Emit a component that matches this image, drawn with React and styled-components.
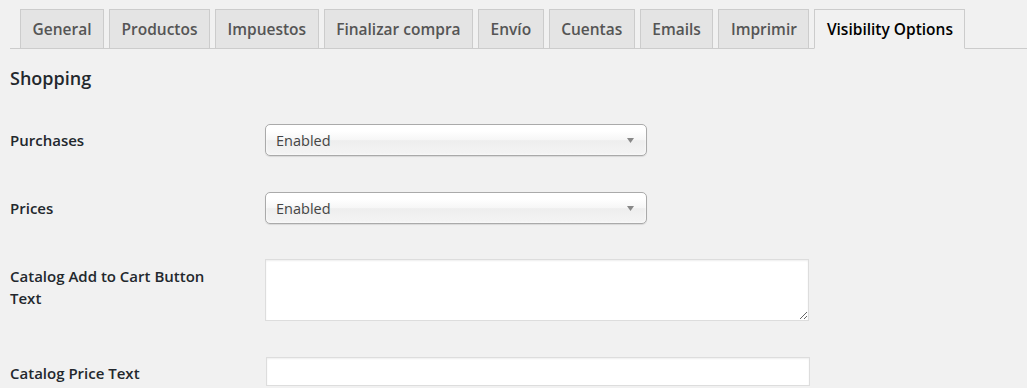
import styled, { createGlobalStyle } from 'styled-components'

const GlobalStyle = createGlobalStyle`
  html, body {
    margin: 0;
    padding: 0;
    background: #f1f1f1;
  }
  body {
    font-family: 'Open Sans', 'Noto Sans', sans-serif;
    color: #23282d;
  }
`

const Page = styled.div`
  width: 1027px;
  height: 388px;
  overflow: hidden;
  background: #f1f1f1;
`

const TabBar = styled.nav`
  display: flex;
  align-items: flex-end;
  margin-left: 10px;
  padding: 9px 0 0 5px;
  border-bottom: 1px solid #ccc;
`

const Tab = styled.a`
  display: block;
  box-sizing: border-box;
  height: 40px;
  margin: 0 0 -1px 5px;
  padding: 0 11.5px;
  border: 1px solid #ccc;
  border-bottom-color: ${p => (p.$active ? '#f1f1f1' : '#ccc')};
  background: ${p => (p.$active ? '#f1f1f1' : '#e4e4e4')};
  color: ${p => (p.$active ? '#000' : '#555')};
  font-size: 15.5px;
  font-weight: 600;
  line-height: 38px;
  white-space: nowrap;
  text-decoration: none;
`

const Heading = styled.h3`
  margin: 17px 0 16px 10px;
  font-size: 18px;
  font-weight: 600;
  line-height: 24px;
  color: #23282d;
`

const FormTable = styled.div`
  display: flex;
  flex-direction: column;
`

const Row = styled.div`
  display: grid;
  grid-template-columns: 265px 1fr;
  align-items: start;
  padding: 18px 0;
`

const Label = styled.label`
  display: block;
  max-width: 215px;
  padding: 5px 0 0 10px;
  font-size: 15px;
  font-weight: 600;
  line-height: 22px;
  color: #23282d;
`

const Chosen = styled.div`
  display: flex;
  align-items: center;
  justify-content: space-between;
  box-sizing: border-box;
  width: 382px;
  height: 32px;
  padding: 0 12px 0 10px;
  border: 1px solid #aaa;
  border-radius: 5px;
  background: linear-gradient(#fff 20%, #f6f6f6 50%, #eee 52%, #f4f4f4 100%);
  box-shadow: inset 0 0 3px #fff, 0 1px 1px rgba(0, 0, 0, 0.1);
  font-size: 14.5px;
  color: #444;
`

const TextArea = styled.textarea`
  display: block;
  box-sizing: border-box;
  width: 544px;
  height: 62px;
  margin: -1px 0 0;
  border: 1px solid #ddd;
  background: #fff;
  box-shadow: inset 0 1px 2px rgba(0, 0, 0, 0.07);
  font-family: inherit;
  font-size: 14px;
  outline: none;
`

const TextInput = styled.input`
  display: block;
  box-sizing: border-box;
  width: 544px;
  height: 29px;
  margin: 0 0 0 1px;
  border: 1px solid #ddd;
  background: #fff;
  box-shadow: inset 0 1px 2px rgba(0, 0, 0, 0.07);
  font-family: inherit;
  font-size: 14px;
  outline: none;
`

const tabs = ['General', 'Productos', 'Impuestos', 'Finalizar compra', 'Envío', 'Cuentas', 'Emails', 'Imprimir', 'Visibility Options']

const Arrow = () => (
  <svg width="7" height="5" viewBox="0 0 7 5">
    <path d="M0 0h7L3.5 5z" fill="#888" />
  </svg>
)

const Select = ({ value }) => (
  <Chosen>
    <span>{value}</span>
    <Arrow />
  </Chosen>
)

const App = () => (
  <Page>
    <GlobalStyle />
    <TabBar>
      {tabs.map(t => (
        <Tab key={t} $active={t === 'Visibility Options'}>{t}</Tab>
      ))}
    </TabBar>
    <Heading>Shopping</Heading>
    <FormTable>
      <Row>
        <Label>Purchases</Label>
        <Select value="Enabled" />
      </Row>
      <Row>
        <Label>Prices</Label>
        <Select value="Enabled" />
      </Row>
      <Row>
        <Label>Catalog Add to Cart Button Text</Label>
        <TextArea />
      </Row>
      <Row>
        <Label>Catalog Price Text</Label>
        <TextInput type="text" />
      </Row>
    </FormTable>
  </Page>
)

export default App
